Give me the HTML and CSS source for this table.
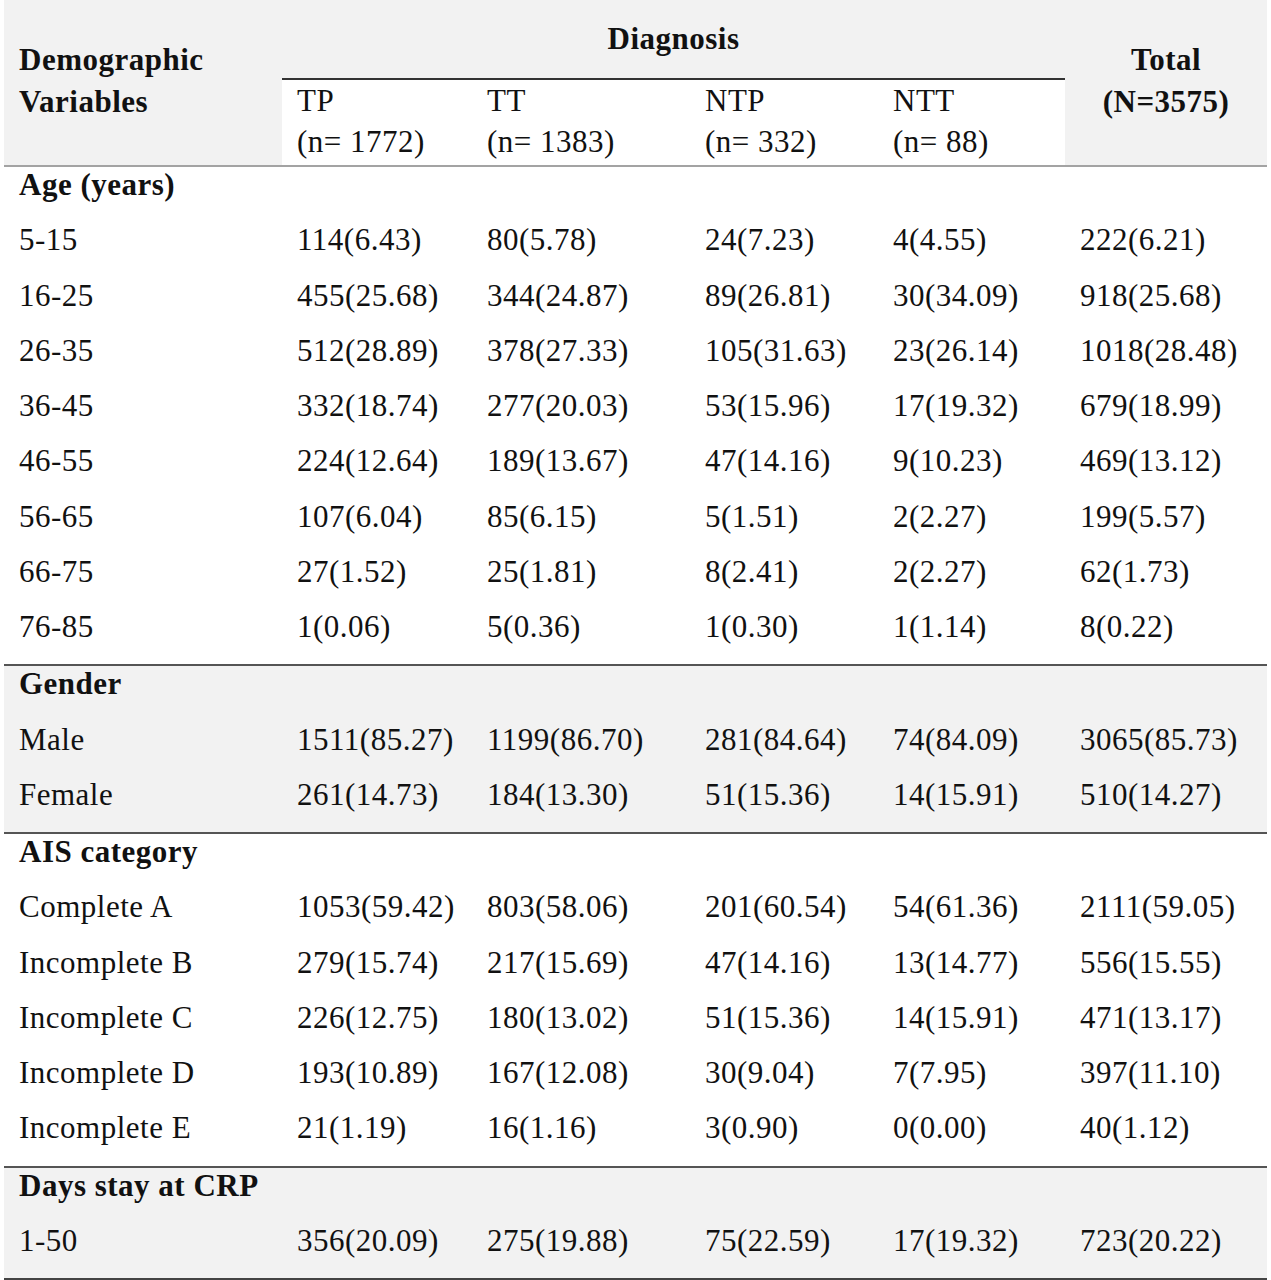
FILE: index.html
```html
<!DOCTYPE html>
<html lang="en">
<head>
    <meta charset="UTF-8">
    <meta name="viewport" content="width=device-width, initial-scale=1.0">
    <title>Demographic Variables by Diagnosis</title>
    <link rel="stylesheet" href="styles.css">
</head>
<body>

    <table class="demo-table">
        <colgroup>
            <col class="col-label">
            <col class="col-tp">
            <col class="col-tt">
            <col class="col-ntp">
            <col class="col-ntt">
            <col class="col-total">
        </colgroup>
        <thead>
            <tr>
                <th rowspan="2" class="head-var">Demographic<br>Variables</th>
                <th colspan="4" class="head-diag">Diagnosis</th>
                <th rowspan="2" class="head-total">Total<br>(N=3575)</th>
            </tr>
            <tr class="sub">
                <th>TP<br>(n= 1772)</th>
                <th>TT<br>(n= 1383)</th>
                <th>NTP<br>(n= 332)</th>
                <th>NTT<br>(n= 88)</th>
            </tr>
        </thead>

        <!-- Age -->
        <tbody class="first">
            <tr><td class="section" colspan="6">Age (years)</td></tr>
            <tr><td>5-15</td><td>114(6.43)</td><td>80(5.78)</td><td>24(7.23)</td><td>4(4.55)</td><td>222(6.21)</td></tr>
            <tr><td>16-25</td><td>455(25.68)</td><td>344(24.87)</td><td>89(26.81)</td><td>30(34.09)</td><td>918(25.68)</td></tr>
            <tr><td>26-35</td><td>512(28.89)</td><td>378(27.33)</td><td>105(31.63)</td><td>23(26.14)</td><td>1018(28.48)</td></tr>
            <tr><td>36-45</td><td>332(18.74)</td><td>277(20.03)</td><td>53(15.96)</td><td>17(19.32)</td><td>679(18.99)</td></tr>
            <tr><td>46-55</td><td>224(12.64)</td><td>189(13.67)</td><td>47(14.16)</td><td>9(10.23)</td><td>469(13.12)</td></tr>
            <tr><td>56-65</td><td>107(6.04)</td><td>85(6.15)</td><td>5(1.51)</td><td>2(2.27)</td><td>199(5.57)</td></tr>
            <tr><td>66-75</td><td>27(1.52)</td><td>25(1.81)</td><td>8(2.41)</td><td>2(2.27)</td><td>62(1.73)</td></tr>
            <tr><td>76-85</td><td>1(0.06)</td><td>5(0.36)</td><td>1(0.30)</td><td>1(1.14)</td><td>8(0.22)</td></tr>
        </tbody>

        <!-- Gender -->
        <tbody class="shade">
            <tr><td class="section" colspan="6">Gender</td></tr>
            <tr><td>Male</td><td>1511(85.27)</td><td>1199(86.70)</td><td>281(84.64)</td><td>74(84.09)</td><td>3065(85.73)</td></tr>
            <tr><td>Female</td><td>261(14.73)</td><td>184(13.30)</td><td>51(15.36)</td><td>14(15.91)</td><td>510(14.27)</td></tr>
        </tbody>

        <!-- AIS -->
        <tbody>
            <tr><td class="section" colspan="6">AIS category</td></tr>
            <tr><td>Complete A</td><td>1053(59.42)</td><td>803(58.06)</td><td>201(60.54)</td><td>54(61.36)</td><td>2111(59.05)</td></tr>
            <tr><td>Incomplete B</td><td>279(15.74)</td><td>217(15.69)</td><td>47(14.16)</td><td>13(14.77)</td><td>556(15.55)</td></tr>
            <tr><td>Incomplete C</td><td>226(12.75)</td><td>180(13.02)</td><td>51(15.36)</td><td>14(15.91)</td><td>471(13.17)</td></tr>
            <tr><td>Incomplete D</td><td>193(10.89)</td><td>167(12.08)</td><td>30(9.04)</td><td>7(7.95)</td><td>397(11.10)</td></tr>
            <tr><td>Incomplete E</td><td>21(1.19)</td><td>16(1.16)</td><td>3(0.90)</td><td>0(0.00)</td><td>40(1.12)</td></tr>
        </tbody>

        <!-- Days stay -->
        <tbody class="shade last">
            <tr><td class="section" colspan="6">Days stay at CRP</td></tr>
            <tr><td>1-50</td><td>356(20.09)</td><td>275(19.88)</td><td>75(22.59)</td><td>17(19.32)</td><td>723(20.22)</td></tr>
        </tbody>
    </table>

</body>
</html>
```

FILE: styles.css
```css
body {
    margin: 0;
    padding: 0;
    background-color: #fff;
    font-family: "Liberation Serif", "Times New Roman", serif;
    color: #111;
}

.demo-table {
    margin: 0 4px;
    width: 1263px;
    border-collapse: collapse;
    table-layout: fixed;
    font-size: 31px;
    letter-spacing: 0.5px;
}

.col-label { width: 278px; }
.col-tp { width: 190px; }
.col-tt { width: 218px; }
.col-ntp { width: 188px; }
.col-ntt { width: 187px; }
.col-total { width: 202px; }

/* header */
thead th {
    background-color: #f2f2f2;
    padding: 0;
    vertical-align: middle;
}

.head-var {
    text-align: left;
    padding-left: 15px;
    padding-bottom: 4px;
    line-height: 42px;
    height: 160px;
}

.head-diag {
    height: 78px;
    line-height: 78px;
    text-align: center;
    border-bottom: 2px solid #333;
}

.head-total {
    text-align: center;
    padding-bottom: 4px;
    line-height: 42px;
}

.sub th {
    background-color: #fff;
    font-weight: normal;
    text-align: left;
    padding-left: 15px;
    padding-bottom: 3px;
    height: 81px;
    line-height: 41px;
}

/* body */
td {
    padding: 1px 8px 21.25px 15px;
    line-height: 33px;
    vertical-align: top;
    white-space: nowrap;
}

td.section {
    font-weight: bold;
}

tbody tr:first-child td {
    border-top: 2px solid #555;
}

tbody.first tr:first-child td {
    border-top: 2px solid #a3a3a3;
}

tbody.shade td {
    background-color: #f2f2f2;
}

tbody.last tr:last-child td {
    border-bottom: 2px solid #444;
}
```
